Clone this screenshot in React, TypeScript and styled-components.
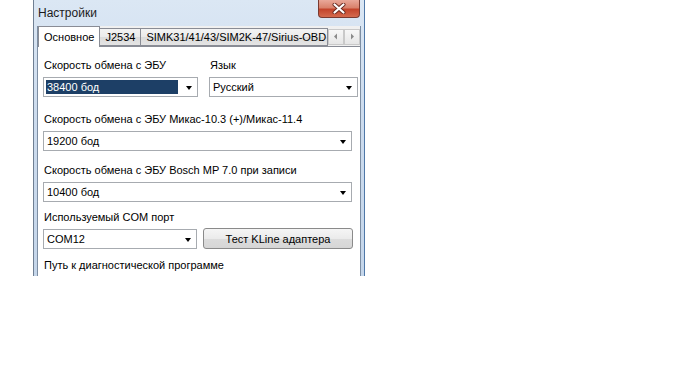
import React from "react";
import styled, { createGlobalStyle } from "styled-components";

const GlobalStyle = createGlobalStyle`
  html, body {
    margin: 0;
    padding: 0;
    background: #fff;
  }
  body {
    font-family: "Liberation Sans", Arial, sans-serif;
    font-size: 11px;
    color: #000;
  }
`;

/**
 * Outer window frame (Aero basic look).
 */
const Window = styled.div`
  margin-left: 33px;
  width: 332px;
  height: 276px;
  box-sizing: border-box;
  overflow: hidden;
  display: flex;
  flex-direction: column;
  background: linear-gradient(180deg, #dbe7f4 0%, #cddcee 40%, #c5d6ea 100%);
  border-left: 1px solid #6f7f93;
  border-right: 1px solid #4f78a8;
  padding: 0 3px 0 3px;
`;

const TitleBar = styled.div`
  height: 26px;
  flex: none;
  display: flex;
  align-items: flex-start;
  justify-content: space-between;
`;

const Title = styled.div`
  font-size: 12px;
  color: #1b1b1b;
  padding: 6px 0 0 1px;
`;

const CloseButton = styled.div`
  width: 42px;
  height: 18px;
  margin-right: 1px;
  box-sizing: border-box;
  border: 1px solid #7a3a30;
  border-top: none;
  border-radius: 0 0 4px 4px;
  background: linear-gradient(180deg, #e9a899 0%, #d9826c 45%, #c3442b 55%, #d46a4e 100%);
  display: flex;
  align-items: center;
  justify-content: center;
`;

/**
 * Client area of the dialog.
 */
const Client = styled.div`
  flex: 1;
  display: flex;
  flex-direction: column;
  background: #f0f0f0;
  border-left: 1px solid #7d8ea3;
  border-right: 1px solid #7d8ea3;
`;

const TabStrip = styled.div`
  height: 20px;
  display: flex;
  align-items: flex-end;
  position: relative;
  z-index: 1;
`;

const Tab = styled.div<{ active?: boolean; grow?: boolean }>`
  box-sizing: border-box;
  height: ${(p) => (p.active ? "21px" : "18px")};
  margin-bottom: ${(p) => (p.active ? "-1px" : "0")};
  padding: 0 ${(p) => (p.active ? "5px" : "5px")};
  display: flex;
  align-items: center;
  white-space: nowrap;
  overflow: hidden;
  border: 1px solid #898c95;
  border-bottom: ${(p) => (p.active ? "none" : "1px solid #898c95")};
  margin-left: ${(p) => (p.active ? "0" : "-1px")};
  background: ${(p) =>
    p.active ? "#fff" : "linear-gradient(180deg, #f3f3f3 0%, #ebebeb 50%, #dcdcdc 51%, #e4e4e4 100%)"};
  flex: ${(p) => (p.grow ? "1" : "none")};
  min-width: 0;
  color: #000;
`;

const ScrollButtons = styled.div`
  display: flex;
  flex: none;
  align-self: center;
  margin-top: 1px;
`;

const ScrollButton = styled.div`
  width: 16px;
  height: 16px;
  box-sizing: border-box;
  border: 1px solid #c9c9c9;
  background: linear-gradient(180deg, #f7f7f7, #e6e6e6);
  display: flex;
  align-items: center;
  justify-content: center;
`;

const Panel = styled.div`
  flex: 1;
  background: #fff;
  border-top: 1px solid #898c95;
  padding: 12px 5px 0 5px;
  display: flex;
  flex-direction: column;
`;

const Row = styled.div<{ top: number }>`
  display: flex;
  gap: 11px;
  margin-top: ${(p) => p.top}px;
`;

const Field = styled.div<{ width?: number }>`
  display: flex;
  flex-direction: column;
  width: ${(p) => (p.width ? `${p.width}px` : "auto")};
`;

const Label = styled.div`
  height: 13px;
  line-height: 13px;
  padding-left: 1px;
  margin-bottom: 5px;
  white-space: nowrap;
`;

const Combo = styled.div<{ width: number }>`
  width: ${(p) => p.width}px;
  height: 20px;
  box-sizing: border-box;
  border: 1px solid #a7abb0;
  background: #fff;
  display: flex;
  align-items: stretch;
`;

const ComboValue = styled.div<{ selected?: boolean }>`
  flex: 1;
  margin: 2px;
  padding-left: 1px;
  display: flex;
  align-items: center;
  background: ${(p) => (p.selected ? "#1d3f66" : "transparent")};
  color: ${(p) => (p.selected ? "#fff" : "#000")};
`;

const ComboArrow = styled.div`
  width: 17px;
  flex: none;
  display: flex;
  align-items: center;
  justify-content: center;

  &::after {
    content: "";
    border-left: 3.5px solid transparent;
    border-right: 3.5px solid transparent;
    border-top: 4px solid #000;
    margin-top: 1px;
  }
`;

const Button = styled.div`
  width: 150px;
  height: 21px;
  box-sizing: border-box;
  border: 1px solid #8a8a8a;
  border-radius: 3px;
  background: linear-gradient(180deg, #f5f5f5 0%, #ebebeb 50%, #dcdcdc 51%, #d6d6d6 100%);
  display: flex;
  align-items: center;
  justify-content: center;
  align-self: flex-end;
  margin-bottom: 0;
  color: #000;
`;

const Arrow: React.FC<{ dir: "left" | "right" }> = ({ dir }) => (
  <svg width="6" height="7" viewBox="0 0 6 7">
    {dir === "left" ? (
      <polygon points="4,0.5 4,6.5 1,3.5" fill="#8a8a8a" />
    ) : (
      <polygon points="2,0.5 2,6.5 5,3.5" fill="#8a8a8a" />
    )}
  </svg>
);

interface SelectProps {
  /**
   * Combo width.
   */
  width: number;

  /**
   * Displayed value.
   */
  value: string;

  /**
   * Whether the value is highlighted (focused combo).
   */
  selected?: boolean;
}

const Select: React.FC<SelectProps> = ({ width, value, selected }) => (
  <Combo width={width}>
    <ComboValue selected={selected}>{value}</ComboValue>
    <ComboArrow />
  </Combo>
);

const App: React.FC = () => {
  return (
    <>
      <GlobalStyle />
      <Window>
        <TitleBar>
          <Title>Настройки</Title>
          <CloseButton>
            <svg width="14" height="11" viewBox="0 0 14 11">
              <path
                d="M2.5 1.5 L11.5 9.5 M11.5 1.5 L2.5 9.5"
                stroke="#6a2a20"
                strokeWidth="4"
                strokeLinecap="round"
              />
              <path
                d="M2.5 1.5 L11.5 9.5 M11.5 1.5 L2.5 9.5"
                stroke="#fff"
                strokeWidth="2.2"
                strokeLinecap="round"
              />
            </svg>
          </CloseButton>
        </TitleBar>
        <Client>
          <TabStrip>
            <Tab active>Основное</Tab>
            <Tab>J2534</Tab>
            <Tab grow>SIMK31/41/43/SIM2K-47/Sirius-OBD</Tab>
            <ScrollButtons>
              <ScrollButton>
                <Arrow dir="left" />
              </ScrollButton>
              <ScrollButton>
                <Arrow dir="right" />
              </ScrollButton>
            </ScrollButtons>
          </TabStrip>
          <Panel>
            <Row top={0}>
              <Field width={155}>
                <Label>Скорость обмена с ЭБУ</Label>
                <Select width={155} value="38400 бод" selected />
              </Field>
              <Field width={149}>
                <Label>Язык</Label>
                <Select width={149} value="Русский" />
              </Field>
            </Row>
            <Row top={16}>
              <Field>
                <Label>Скорость обмена с ЭБУ Микас-10.3 (+)/Микас-11.4</Label>
                <Select width={309} value="19200 бод" />
              </Field>
            </Row>
            <Row top={13}>
              <Field>
                <Label>Скорость обмена с ЭБУ Bosch MP 7.0 при записи</Label>
                <Select width={309} value="10400 бод" />
              </Field>
            </Row>
            <Row top={9} style={{ gap: 6 }}>
              <Field width={154}>
                <Label>Используемый COM порт</Label>
                <Select width={154} value="COM12" />
              </Field>
              <Button>Тест KLine адаптера</Button>
            </Row>
            <Row top={10}>
              <Field>
                <Label>Путь к диагностической программе</Label>
              </Field>
            </Row>
          </Panel>
        </Client>
      </Window>
    </>
  );
};

export default App;
